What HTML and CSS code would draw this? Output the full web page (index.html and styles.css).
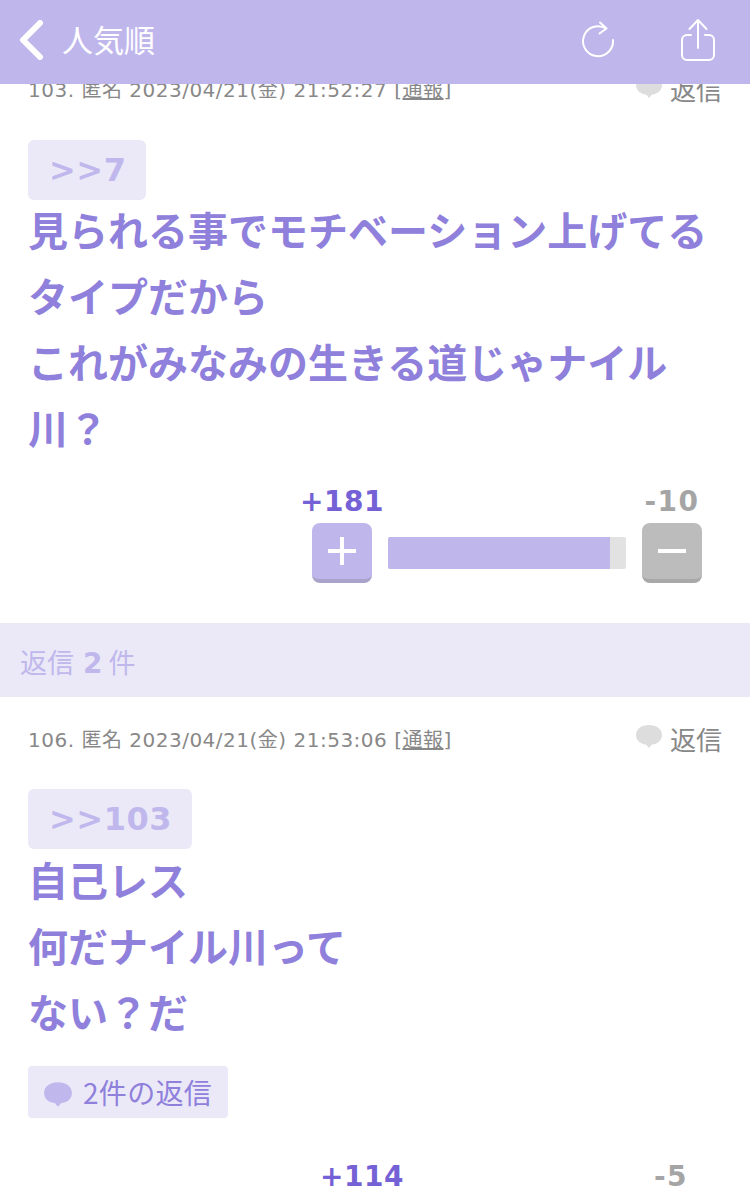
FILE: index.html
```html
<!DOCTYPE html>
<html lang="ja">
<head>
<meta charset="utf-8">
<title>人気順</title>
<link rel="stylesheet" href="styles.css">
</head>
<body>
<header class="topbar">
  <svg class="back" width="26" height="40" viewBox="0 0 26 40"><path d="M22 3 5 20l17 17" fill="none" stroke="#fff" stroke-width="6" stroke-linecap="round" stroke-linejoin="round"/></svg>
  <span class="title">人気順</span>
  <svg class="reload" width="36" height="40" viewBox="0 0 36 40"><path d="M26 8.500A15 15 0 1 0 33 20" fill="none" stroke="#fff" stroke-width="2" stroke-linecap="round"/><path d="M20 2.500 26.500 8.500 19.500 13.500" fill="none" stroke="#fff" stroke-width="2" stroke-linecap="round" stroke-linejoin="round"/></svg>
  <svg class="share" width="36" height="44" viewBox="0 0 36 44"><path d="M11 17H7a5 5 0 0 0-5 5v15a5 5 0 0 0 5 5h22a5 5 0 0 0 5-5V22a5 5 0 0 0-5-5h-4" fill="none" stroke="#fff" stroke-width="2" stroke-linecap="round"/><path d="M18 30V3M9.500 11 18 2l8.500 9" fill="none" stroke="#fff" stroke-width="2" stroke-linecap="round" stroke-linejoin="round"/></svg>
</header>
<main class="page">
  <article class="post">
    <div class="meta">
      <span class="info">103. 匿名 2023/04/21(金) 21:52:27 [<u>通報</u>]</span>
      <span class="reply"><svg class="bubble" width="28" height="24" viewBox="0 0 28 24"><path d="M14 1C6.500 1 1 5 1 11c0 5 4 9 10 9.500L14 24l3-3.500C23 20 27 16 27 11 27 5 21.500 1 14 1Z" fill="#ddd"/></svg>返信</span>
    </div>
    <div class="anchor">&gt;&gt;7</div>
    <p class="body">見られる事でモチベーション上げてる<br>タイプだから<br>これがみなみの生きる道じゃナイル<br>川？</p>
    <div class="votes">
      <div class="counts"><span class="plus-count">+181</span><span class="minus-count">-10</span></div>
      <div class="controls">
        <span class="btn btn-plus"><svg width="32" height="32" viewBox="0 0 32 32"><path d="M16 2v28M2 16h28" stroke="#fff" stroke-width="4"/></svg></span>
        <div class="bar"><div class="fill" style="width:93.300%"></div></div>
        <span class="btn btn-minus"><svg width="32" height="32" viewBox="0 0 32 32"><path d="M2 16h28" stroke="#fff" stroke-width="4"/></svg></span>
      </div>
    </div>
  </article>
  <div class="strip">返信 <b>2</b> 件</div>
  <article class="post second">
    <div class="meta">
      <span class="info">106. 匿名 2023/04/21(金) 21:53:06 [<u>通報</u>]</span>
      <span class="reply"><svg class="bubble" width="28" height="24" viewBox="0 0 28 24"><path d="M14 1C6.500 1 1 5 1 11c0 5 4 9 10 9.500L14 24l3-3.500C23 20 27 16 27 11 27 5 21.500 1 14 1Z" fill="#ddd"/></svg>返信</span>
    </div>
    <div class="anchor">&gt;&gt;103</div>
    <p class="body">自己レス<br>何だナイル川って<br>ない？だ</p>
    <div class="replies"><svg width="30" height="26" viewBox="0 0 28 24"><path d="M14 1C6.500 1 1 5 1 11c0 5 4 9 10 9.500L14 24l3-3.500C23 20 27 16 27 11 27 5 21.500 1 14 1Z" fill="#c0b8ec"/></svg>2件の返信</div>
    <div class="counts tail"><span class="plus-count">+114</span><span class="minus-count">-5</span></div>
  </article>
</main>
</body>
</html>
```
FILE: styles.css
```css
* { box-sizing: border-box; }
html, body { margin: 0; height: 100%; overflow: hidden; background: #fff; }
body { font-family: "Noto Sans CJK JP", "Noto Sans", sans-serif; }
.topbar {
  position: fixed; top: 0; left: 0; right: 0; z-index: 2;
  height: 84px; background: #bfb7ec; color: #fff;
  display: flex; align-items: center; padding: 0 34px 4px 18px;
}
.back { margin-right: 18px; }
.title { font-size: 31px; line-height: 40px; flex: 1; margin-top: -2px; }
.reload { margin-right: 64px; }
.page { padding-top: 70px; }
.post { padding: 0 28px; }
.meta { display: flex; justify-content: space-between; align-items: center; height: 36px; }
.info { font-size: 20px; color: #888; font-family: "DejaVu Sans", "Noto Sans CJK JP", sans-serif; letter-spacing: 0.5px; }
.reply { display: flex; align-items: center; gap: 7px; font-size: 26px; color: #888; }
.bubble { margin-top: -4px; }
.anchor {
  display: flex; align-items: center; width: fit-content; margin-top: 34px; height: 60px; padding: 0 20px 0 21px; border-radius: 6px;
  background: #ebe9f8; color: #c0b8ec; letter-spacing: 0.5px;
  font-family: "DejaVu Sans", sans-serif; font-weight: 700; font-size: 32px;
}
.body { margin: -4px 0 0; font-size: 40px; line-height: 66px; font-weight: 700; color: #8f80dc; }
.votes { margin-top: 27px; padding-bottom: 40px; }
.counts { display: flex; justify-content: flex-end; height: 36px; line-height: 30px; font-family: "DejaVu Sans", sans-serif; font-weight: 700; font-size: 28px; letter-spacing: 0.5px; }
.plus-count { color: #7561d6; width: 82px; margin-right: 260px; text-align: center; }
.minus-count { color: #a5a5a5; width: 60px; margin-right: 20px; text-align: center; letter-spacing: 1.5px; }
.controls { display: flex; align-items: center; justify-content: flex-end; gap: 16px; padding-right: 20px; }
.btn { width: 60px; height: 60px; border-radius: 8px; display: flex; align-items: center; justify-content: center; }
.btn-plus { background: #bfb7ec; border-bottom: 4px solid #a9a3ca; }
.btn-minus { background: #bcbcbc; border-bottom: 4px solid #a8a8a8; }
.bar { width: 238px; height: 32px; background: #e2e2e2; border-radius: 2px; overflow: hidden; }
.fill { height: 100%; background: #bfb7ec; }
.strip { height: 74px; line-height: 78px; background: #ebe9f8; color: #c0b8ec; font-size: 27px; padding-left: 20px; }
.strip b { font-family: "DejaVu Sans", sans-serif; font-size: 28px; margin: 0 0 0 3px; }
.second { padding-top: 23px; }
.second .anchor { margin-top: 33px; }
.second .body { margin-top: -3px; }
.replies {
  display: flex; align-items: center; gap: 10px; width: 200px; height: 52px; margin-top: 22px;
  padding-left: 15px; background: #ebe9f8; border-radius: 4px; color: #8f80dc; font-size: 28px; letter-spacing: 0.3px;
}
.replies svg { margin-top: 4px; }
.tail { margin-top: 44px; }
.tail .plus-count { margin-right: 239px; }
.tail .minus-count { margin-right: 21px; }
```
